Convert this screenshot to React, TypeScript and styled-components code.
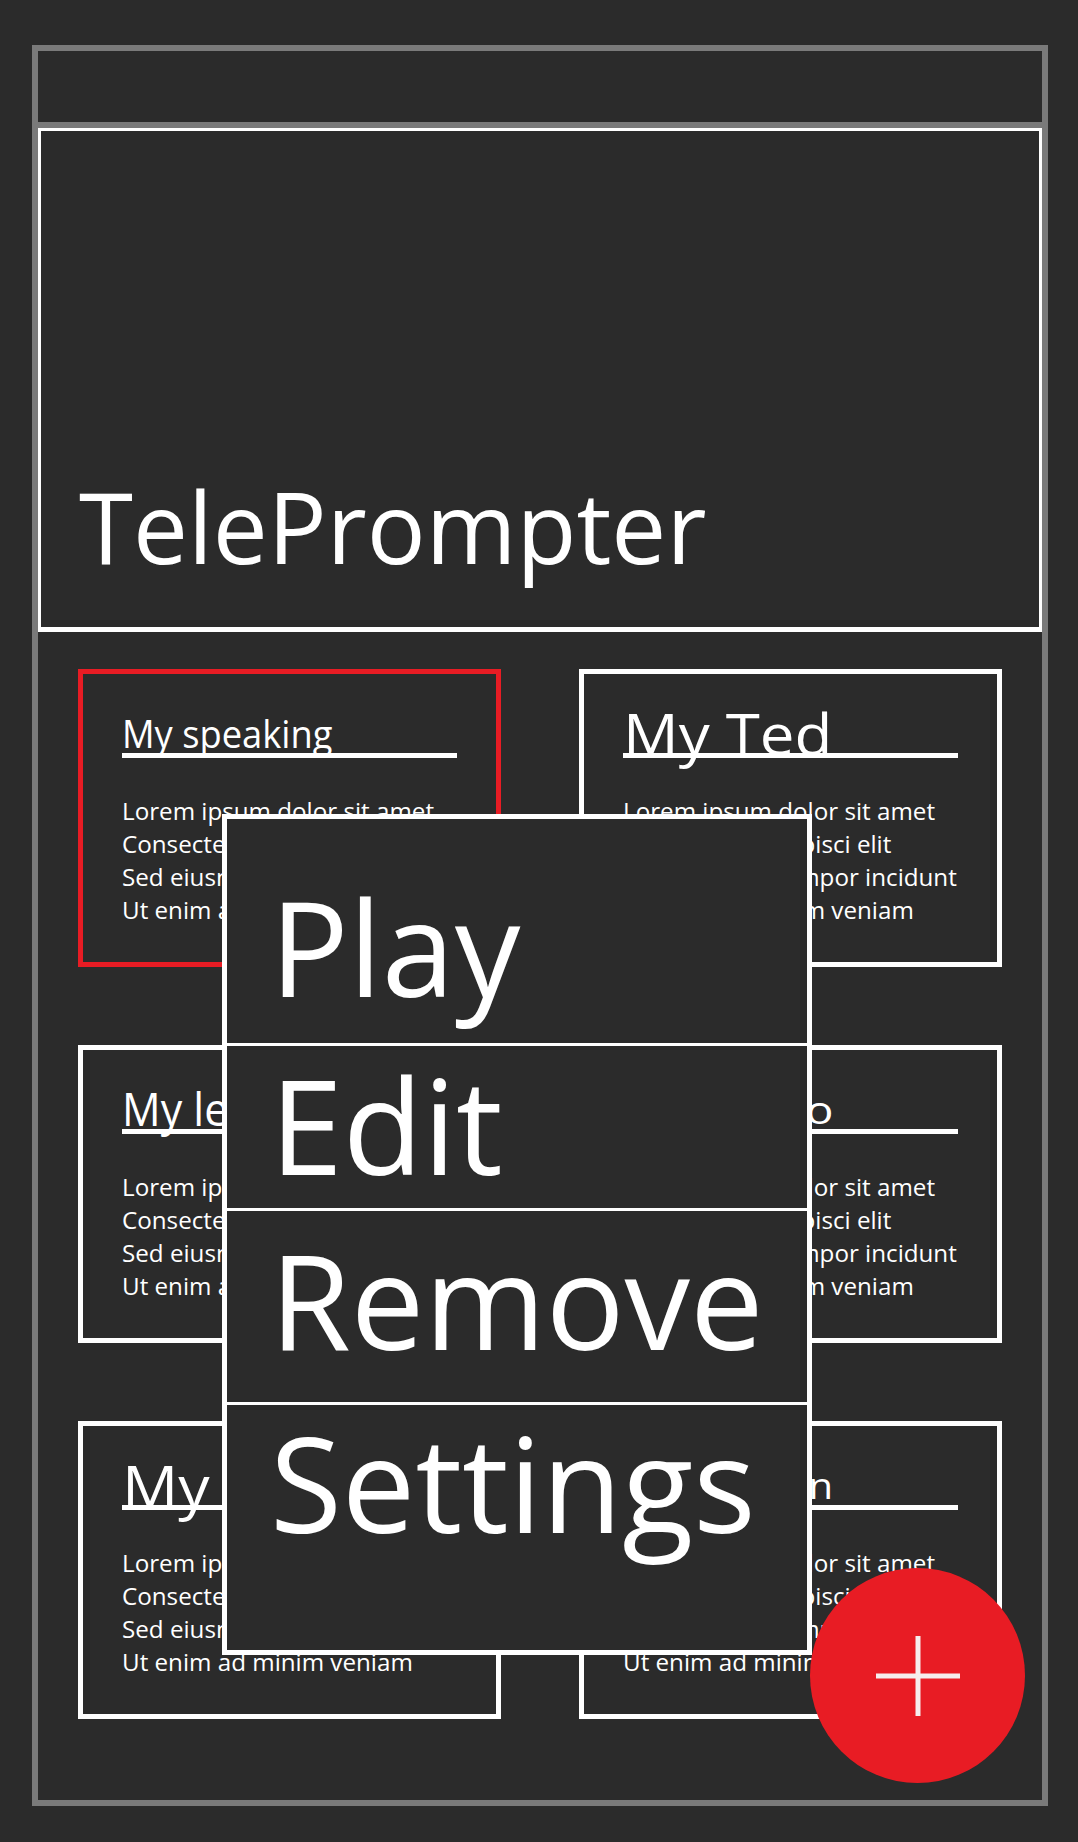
import React, { useLayoutEffect, useRef, useState } from "react";
import styled, { createGlobalStyle } from "styled-components";

const GlobalStyle = createGlobalStyle`
  html, body {
    margin: 0;
    padding: 0;
    background: #2b2b2b;
  }
  body {
    font-family: "Open Sans", "Noto Sans", sans-serif;
    color: #ffffff;
  }
  *, *::before, *::after {
    box-sizing: border-box;
  }
`;

const Frame = styled.div`
  position: relative;
  width: 1016px;
  margin: 45px 0 36px 32px;
  border: 6px solid #7a7a7a;
  display: flex;
  flex-direction: column;
`;

const TopBar = styled.header`
  height: 77px;
  border-bottom: 6px solid #7a7a7a;
`;

const Hero = styled.section`
  height: 504px;
  border: 3px solid #ffffff;
  border-bottom-width: 5px;
  display: flex;
  align-items: flex-end;
  padding: 0 0 52px 38px;
`;

const HeroTitle = styled.h1`
  margin: 0;
  font-weight: 400;
  font-size: 98px;
  line-height: 1;
  white-space: nowrap;
`;

const CardGrid = styled.main`
  display: grid;
  grid-template-columns: repeat(2, 423px);
  column-gap: 78px;
  row-gap: 78px;
  padding: 37px 40px 81px;
`;

const Card = styled.article<{ $active?: boolean }>`
  height: 298px;
  border: 5px solid ${(p) => (p.$active ? "#e81c24" : "#ffffff")};
  padding: 0 39px;
  overflow: hidden;
`;

const TitleBar = styled.div`
  height: 84px;
  border-bottom: 5px solid #ffffff;
  display: flex;
  align-items: flex-end;
`;

const TitleText = styled.h2<{ $size: number }>`
  margin: 0;
  display: inline-block;
  font-weight: 400;
  font-size: ${(p) => p.$size}px;
  line-height: 40px;
  white-space: nowrap;
  transform-origin: left bottom;
`;

const CardBody = styled.p`
  margin: 36px 0 0;
  font-size: 24.2px;
  line-height: 33px;
  white-space: nowrap;
`;

const Menu = styled.nav`
  position: absolute;
  left: 184px;
  top: 763px;
  width: 590px;
  height: 841px;
  border: 5px solid #ffffff;
  background: #2b2b2b;
  display: flex;
  flex-direction: column;
`;

const MenuItem = styled.div<{ $h: number; $pt: number }>`
  height: ${(p) => p.$h}px;
  padding: ${(p) => p.$pt}px 0 0 43px;
  font-size: 131px;
  line-height: 1;
  white-space: nowrap;
  & + & {
    border-top: 3px solid #ffffff;
  }
`;

const Fab = styled.button`
  position: absolute;
  left: 772px;
  top: 1517px;
  width: 215px;
  height: 215px;
  border: none;
  border-radius: 50%;
  background: #e81c24;
  padding: 0;
  display: flex;
  align-items: center;
  justify-content: center;
`;

const TITLE_WIDTH = 210;

function FitTitle({ text, size }: { text: string; size: number }) {
  const ref = useRef<HTMLHeadingElement>(null);
  const [scale, setScale] = useState(1);
  useLayoutEffect(() => {
    if (ref.current) {
      const w = ref.current.offsetWidth;
      if (w > 0) setScale(TITLE_WIDTH / w);
    }
  }, [text, size]);
  return (
    <TitleText ref={ref} $size={size} style={{ transform: `scaleX(${scale})` }}>
      {text}
    </TitleText>
  );
}

const cards = [
  { title: "My speaking", size: 38, active: true },
  { title: "My Ted", size: 56 },
  { title: "My lecture", size: 45 },
  { title: "My studio", size: 39 },
  { title: "My talk", size: 59 },
  { title: "My sermon", size: 37 },
];

const menuItems = [
  { label: "Play", h: 224, pt: 62 },
  { label: "Edit", h: 165, pt: 13 },
  { label: "Remove", h: 194, pt: 23 },
  { label: "Settings", h: 248, pt: 12 },
];

export default function App() {
  return (
    <>
      <GlobalStyle />
      <Frame>
        <TopBar />
        <Hero>
          <HeroTitle>TelePrompter</HeroTitle>
        </Hero>
        <CardGrid>
          {cards.map((c) => (
            <Card key={c.title} $active={c.active}>
              <TitleBar>
                <FitTitle text={c.title} size={c.size} />
              </TitleBar>
              <CardBody>
                Lorem ipsum dolor sit amet
                <br />
                Consectetur adipisci elit
                <br />
                Sed eiusmod tempor incidunt
                <br />
                Ut enim ad minim veniam
              </CardBody>
            </Card>
          ))}
        </CardGrid>
        <Menu>
          {menuItems.map((m) => (
            <MenuItem key={m.label} $h={m.h} $pt={m.pt}>
              {m.label}
            </MenuItem>
          ))}
        </Menu>
        <Fab aria-label="Add">
          <svg width="84" height="84" viewBox="0 0 84 84">
            <line x1="0" y1="42" x2="84" y2="42" stroke="#f6eded" strokeWidth="5" />
            <line x1="42" y1="2" x2="42" y2="82" stroke="#f6eded" strokeWidth="5" />
          </svg>
        </Fab>
      </Frame>
    </>
  );
}
